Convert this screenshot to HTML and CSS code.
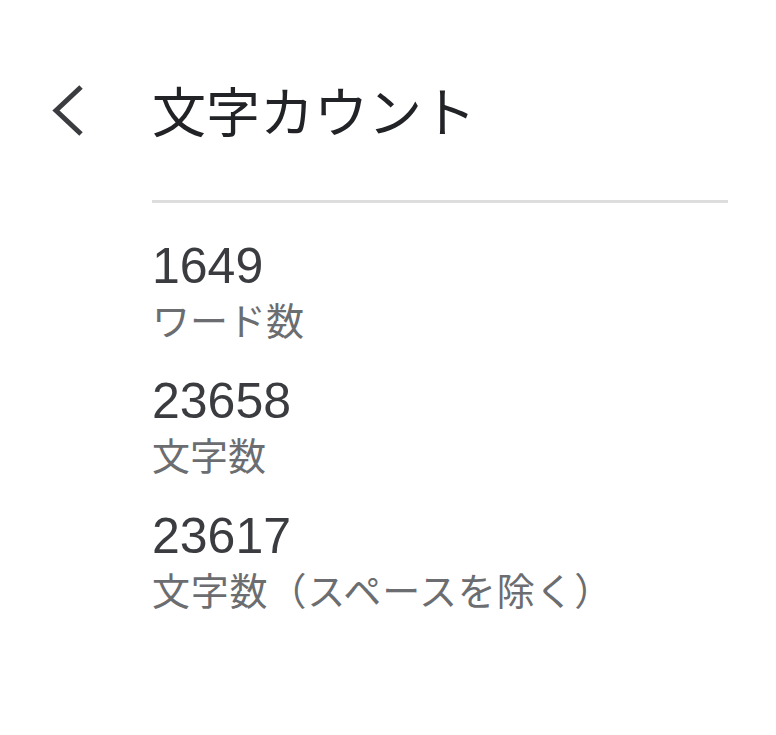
FILE: index.html
```html
<!DOCTYPE html>
<html lang="ja">
<head>
<meta charset="utf-8">
<title>文字カウント</title>
<link rel="stylesheet" href="styles.css">
</head>
<body>
<div class="page">
  <header class="topbar">
    <button class="back" aria-label="戻る">
      <svg width="34" height="54" viewBox="0 0 34 54" aria-hidden="true">
        <polyline points="31,4 6,27.5 31,51" fill="none" stroke="#3a3c40" stroke-width="5" stroke-linejoin="miter"/>
      </svg>
    </button>
    <h1 class="title">文字カウント</h1>
  </header>
  <main class="content">
    <div class="divider"></div>
    <div class="stats">
      <div class="stat">
        <div class="value">1649</div>
        <div class="label">ワード数</div>
      </div>
      <div class="stat">
        <div class="value">23658</div>
        <div class="label">文字数</div>
      </div>
      <div class="stat">
        <div class="value">23617</div>
        <div class="label label-wide">文字数（スペースを除く）</div>
      </div>
    </div>
  </main>
</div>
</body>
</html>
```

FILE: styles.css
```css
html, body {
  margin: 0;
  padding: 0;
  background: #ffffff;
}

body {
  font-family: "Liberation Sans", "Noto Sans CJK JP", sans-serif;
  color: #3a3c40;
}

.page {
  width: 776px;
  height: 735px;
}

.topbar {
  display: flex;
  align-items: center;
  height: 80px;
  padding-top: 70px;
}

.back {
  display: flex;
  align-items: center;
  flex: 0 0 152px;
  width: 152px;
  height: 80px;
  padding: 0 0 0 50px;
  margin: 0;
  border: 0;
  background: transparent;
  box-sizing: border-box;
}

.back svg {
  display: block;
}

.title {
  margin: 0;
  font-family: "Noto Sans CJK JP", sans-serif;
  font-weight: 400;
  font-size: 54px;
  line-height: 1;
  color: #222326;
}

.content {
  padding: 0 48px 0 152px;
}

.divider {
  height: 3px;
  background: #dddddd;
  margin-top: 50px;
}

.stats {
  display: flex;
  flex-direction: column;
  gap: 29px;
  padding-top: 33px;
}

.value {
  font-family: "Liberation Sans", sans-serif;
  font-size: 50px;
  line-height: 60px;
  color: #3a3c40;
}

.label {
  font-family: "Noto Sans CJK JP", sans-serif;
  font-size: 38px;
  line-height: 46px;
  color: #6b6d70;
}

.label-wide {
  letter-spacing: 0.8px;
}
```
